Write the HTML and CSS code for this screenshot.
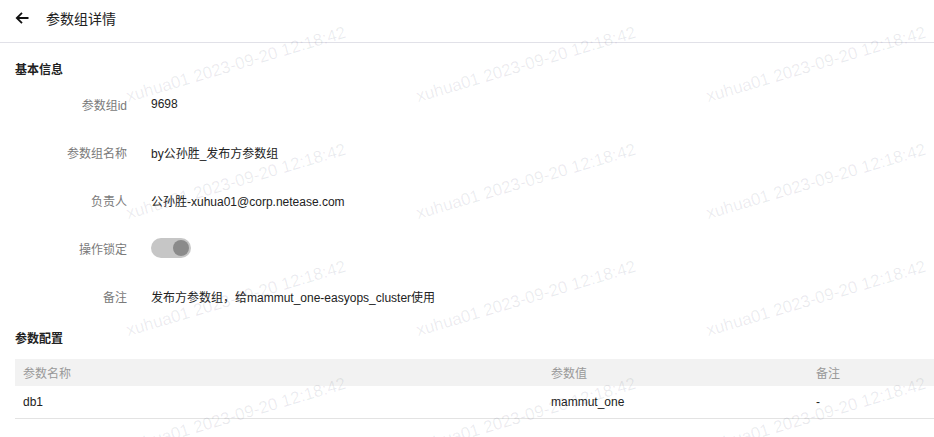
FILE: index.html
```html
<!DOCTYPE html>
<html lang="zh-CN">
<head>
    <meta charset="UTF-8">
    <meta name="viewport" content="width=device-width, initial-scale=1.0">
    <title>参数组详情</title>
    <link rel="stylesheet" href="styles.css">
</head>
<body>
<div class="page">
    <div class="top-bar">
        <span class="back">
            <svg width="14" height="12" viewBox="0 0 14 12"><path d="M13.5 6H1.8M7 0.9L1.8 6 7 11.1" fill="none" stroke="#111" stroke-width="1.8"/></svg>
        </span>
        <span class="page-title">参数组详情</span>
    </div>

    <div class="content">
        <div class="section-title">基本信息</div>
        <div class="info-list">
            <div class="info-row">
                <div class="info-label">参数组id</div>
                <div class="info-value">9698</div>
            </div>
            <div class="info-row">
                <div class="info-label">参数组名称</div>
                <div class="info-value">by公孙胜_发布方参数组</div>
            </div>
            <div class="info-row">
                <div class="info-label">负责人</div>
                <div class="info-value">公孙胜-xuhua01@corp.netease.com</div>
            </div>
            <div class="info-row">
                <div class="info-label">操作锁定</div>
                <div class="info-value"><span class="switch is-on is-disabled"><span class="switch-knob"></span></span></div>
            </div>
            <div class="info-row">
                <div class="info-label">备注</div>
                <div class="info-value">发布方参数组，给mammut_one-easyops_cluster使用</div>
            </div>
        </div>

        <div class="section-title section-title-table">参数配置</div>
        <table class="param-table">
            <thead>
                <tr>
                    <th class="col-name">参数名称</th>
                    <th class="col-value">参数值</th>
                    <th>备注</th>
                </tr>
            </thead>
            <tbody>
                <tr>
                    <td>db1</td>
                    <td>mammut_one</td>
                    <td>-</td>
                </tr>
            </tbody>
        </table>
    </div>

    <!-- watermark layer -->
    <div class="watermark">
        <span>xuhua01 2023-09-20 12:18:42</span><span>xuhua01 2023-09-20 12:18:42</span><span>xuhua01 2023-09-20 12:18:42</span>
        <span>xuhua01 2023-09-20 12:18:42</span><span>xuhua01 2023-09-20 12:18:42</span><span>xuhua01 2023-09-20 12:18:42</span>
        <span>xuhua01 2023-09-20 12:18:42</span><span>xuhua01 2023-09-20 12:18:42</span><span>xuhua01 2023-09-20 12:18:42</span>
        <span>xuhua01 2023-09-20 12:18:42</span><span>xuhua01 2023-09-20 12:18:42</span><span>xuhua01 2023-09-20 12:18:42</span>
    </div>
</div>
</body>
</html>
```

FILE: styles.css
```css
body {
  margin: 0;
  padding: 0;
  background-color: #fff;
  color: #333;
  font-family: "Liberation Sans", "Noto Sans CJK SC", sans-serif;
  font-size: 12px;
}

.page {
  position: relative;
  min-height: 437px;
  overflow: hidden;
}

/* top bar */
.top-bar {
  display: flex;
  align-items: center;
  height: 42px;
  padding-left: 15px;
  border-bottom: 1px solid #e1e1e8;
}

.back {
  display: flex;
  width: 14px;
  height: 12px;
  margin-top: -6px;
}

.page-title {
  margin-left: 17px;
  margin-top: -6px;
  font-size: 14px;
  color: #222;
}

.content {
  padding: 0 0 0 15px;
}

.section-title {
  margin-top: 17px;
  line-height: 20px;
  font-weight: bold;
  color: #222;
}

.section-title-table {
  margin-top: 9px;
}

/* info rows */
.info-row {
  display: flex;
  align-items: center;
  height: 48px;
}

.info-label {
  width: 112px;
  text-align: right;
  color: #7a7a7a;
}

.info-value {
  display: flex;
  align-items: center;
  margin-left: 24px;
  color: #222;
}

.switch {
  position: relative;
  display: inline-block;
  width: 40px;
  height: 20px;
  border-radius: 10px;
  background-color: #c6c6c6;
}

.switch-knob {
  position: absolute;
  top: 2px;
  right: 2px;
  width: 16px;
  height: 16px;
  border-radius: 50%;
  background-color: #8b8b8b;
}

/* table */
.param-table {
  width: 100%;
  margin-top: 10px;
  border-collapse: collapse;
}

.param-table th {
  height: 27px;
  padding: 0 8px;
  text-align: left;
  font-weight: normal;
  color: #999;
  background-color: #f2f2f2;
}

.param-table td {
  height: 32px;
  padding: 0 8px;
  color: #222;
  border-bottom: 1px solid #e3e3e3;
}

.col-name {
  width: 512px;
}

.col-value {
  width: 249px;
}

/* watermark */
.watermark {
  position: absolute;
  top: 6px;
  left: 91px;
  display: grid;
  grid-template-columns: repeat(3, 290px);
  grid-auto-rows: 117px;
  pointer-events: none;
}

.watermark span {
  display: flex;
  align-items: center;
  justify-content: center;
  white-space: nowrap;
  font-size: 17px;
  color: rgba(40, 40, 80, 0.09);
  transform: rotate(-16.5deg);
}
```
